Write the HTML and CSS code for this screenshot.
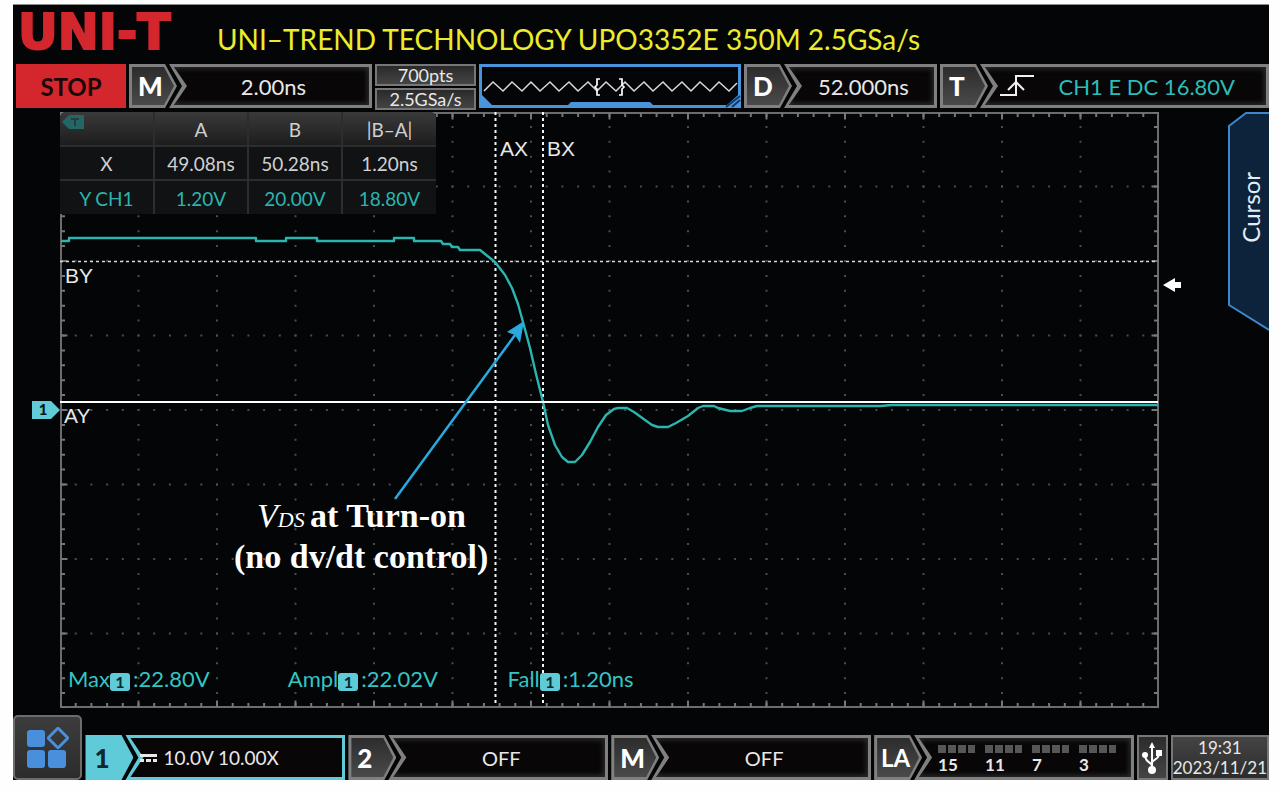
FILE: index.html
```
<!DOCTYPE html>
<html lang="en">
<head>
<meta charset="utf-8">
<title>UNI-T Oscilloscope</title>
<link rel="stylesheet" href="styles.css">
</head>
<body>
<div class="scope">
  <header class="header">
    <span class="logo">UNI-T</span>
    <h1 class="model">UNI–TREND TECHNOLOGY UPO3352E 350M 2.5GSa/s</h1>
  </header>

  <div class="status">
    <button class="stop" type="button">STOP</button>
    <div class="panel panel-m">
      <span class="tag">M</span>
      <span class="value">2.00ns</span>
    </div>
    <div class="sampling">
      <span>700pts</span>
      <span>2.5GSa/s</span>
    </div>
    <svg class="overview" viewBox="0 0 262 44" preserveAspectRatio="none" aria-hidden="true">
      <rect width="262" height="44" fill="#4a94dc"/>
      <path d="M3 3H259V31L248 41H3Z" fill="#030506"/>
      <path d="M0 30L3 31L14 42H0Z" fill="#4a94dc"/>
      <path d="M88 42L92 38H171L175 42V44H88Z" fill="#4a94dc"/>
      <path d="M247 43L261 32M253 43L261 36" stroke="#123a68" stroke-width="2"/>
      <path d="M5 27L14 18L24 27L33 18L43 27L52 18L61 27L71 18L80 27L90 18L99 27L109 18L118 27L127 18L137 27L146 18L155 27L165 18L174 27L184 18L193 27L203 18L212 27L221 18L231 27L240 18L250 27L258 19" fill="none" stroke="#d8d8d8" stroke-width="1.5"/>
      <path d="M121 15H118V21L116 23L118 25V31H121M140 15H143V21L145 23L143 25V31H140" fill="none" stroke="#fff" stroke-width="1.7"/>
    </svg>
    <div class="panel panel-d">
      <span class="tag">D</span>
      <span class="value">52.000ns</span>
    </div>
    <div class="panel panel-t">
      <span class="tag">T</span>
      <span class="value trigger">
        <svg width="36" height="24" viewBox="0 0 36 24" fill="none" stroke="#f0f0f0" stroke-width="2" aria-hidden="true">
          <path d="M1 21H17V2H35M9 16L17 8L25 16"/>
        </svg>
        <span>CH1 E DC 16.80V</span>
      </span>
    </div>
  </div>

  <main class="main">
    <div class="left-rail">
      <svg class="ch-marker" viewBox="0 0 28 24" aria-hidden="true">
        <path d="M0 3H19L28 12L19 21H0Z" fill="#62cbd8"/>
        <text x="11" y="17" text-anchor="middle" class="marker-text">1</text>
      </svg>
    </div>

    <section class="plot">
      <svg class="graph" viewBox="0 0 1099 596" role="img" aria-label="Drain-source voltage waveform">
        <path class="dots-v" d="M78.5 0V596M157 0V596M235.5 0V596M314 0V596M392.5 0V596M471 0V596M549.5 0V596M628 0V596M706.5 0V596M785 0V596M863.5 0V596M942 0V596M1020.5 0V596"/>
        <path class="dots-h" d="M0 74.5H1099M0 149H1099M0 223.5H1099M0 298H1099M0 372.5H1099M0 447H1099M0 521.5H1099"/>
        <rect class="edge" x="1" y="1" width="1097" height="594"/>
        <path class="ticks-h" d="M0 3H1099M0 593H1099"/>
        <path class="ticks-v" d="M3 0V596M1096 0V596"/>
        <path class="major-h" d="M0 4H1099M0 592H1099"/>
        <path class="major-v" d="M4 0V596M1095 0V596"/>
        <path class="cursor-v" d="M435.5 0V594M483 0V594"/>
        <path class="cursor-h" d="M0 149.5H1098"/>
        <path class="wave" d="M1 129H9V126H196V129H226V126H257V129H334V126H354V129H381L383 132H390L392 135H398L400 138H420L425 142L435 150L445 163L452 176L458 192L463 210L470 236L476 262L483 290L488 313L495 333L502 345L508 350H515L522 343L530 330L538 315L546 303L554 297L558 296H567L574 300L585 308L592 313L598 315H608L616 311L628 304L638 296L643 294H654L658 296L670 299H682L690 296L697 294H820L832 293H1098"/>
        <path d="M0 290H1098" stroke="#fff" stroke-width="2"/>
        <path d="M335 387L455 223" stroke="#29a9e0" stroke-width="2.5"/>
        <path d="M464 209L447 220L455 223L460 231Z" fill="#29a9e0"/>
        <g class="cursor-label">
          <text x="440" y="44">AX</text>
          <text x="487" y="44">BX</text>
          <text x="5" y="171">BY</text>
          <text x="4" y="311">AY</text>
        </g>
        <g class="note">
          <text x="197" y="415"><tspan class="note-var">V</tspan><tspan class="note-sub">DS</tspan></text>
          <text x="250" y="415">at Turn-on</text>
          <text x="174" y="456">(no dv/dt control)</text>
        </g>
      </svg>

      <table class="cursors">
        <thead>
          <tr>
            <th scope="col"><svg class="t-mark" width="22" height="14" viewBox="0 0 22 14" aria-hidden="true"><path d="M7 0H22V14H7L0 7Z" fill="#236666"/><path d="M9 4H17M13 4V11" stroke="#2c3c3c" stroke-width="2"/></svg></th>
            <th scope="col">A</th><th scope="col">B</th><th scope="col">|B–A|</th>
          </tr>
        </thead>
        <tbody>
          <tr><th scope="row">X</th><td>49.08ns</td><td>50.28ns</td><td>1.20ns</td></tr>
          <tr class="ch1"><th scope="row">Y CH1</th><td>1.20V</td><td>20.00V</td><td>18.80V</td></tr>
        </tbody>
      </table>

      <div class="measures">
        <span class="measure">Max<b class="badge">1</b>:22.80V</span>
        <span class="measure">Ampl<b class="badge">1</b>:22.02V</span>
        <span class="measure">Fall<b class="badge">1</b>:1.20ns</span>
      </div>
    </section>

    <div class="right-rail">
      <svg class="level" viewBox="0 0 18 14" aria-hidden="true"><path d="M0 7L12 0V4H18V10H12V14Z" fill="#fff"/></svg>
      <button class="cursor-tab" type="button">
        <svg class="tab-shape" viewBox="0 0 41 220" preserveAspectRatio="none" aria-hidden="true">
          <path d="M41 1H18L1 14V193L41 218" fill="#0d233b" stroke="#3f86cd" stroke-width="2"/>
        </svg>
        <span class="tab-text">Cursor</span>
      </button>
    </div>
  </main>

  <footer class="footer">
    <button class="apps" type="button" aria-label="Menu">
      <svg width="42" height="42" viewBox="0 0 42 42" aria-hidden="true">
        <g fill="#4a8fdb">
          <rect x="0" y="3" width="18" height="17" rx="3"/>
          <rect x="0" y="23" width="18" height="18" rx="3"/>
          <rect x="21" y="23" width="18" height="18" rx="3"/>
        </g>
        <rect x="24" y="4" width="14" height="14" rx="1" transform="rotate(45 31 11)" fill="none" stroke="#4a8fdb" stroke-width="3"/>
      </svg>
    </button>
    <div class="panel panel-ch panel-active">
      <span class="tag">1</span>
      <span class="value coupling">
        <svg width="17" height="8" viewBox="0 0 17 8" aria-hidden="true"><path d="M0 0H17V3H0ZM0 5H4V8H0ZM6 5H11V8H6ZM13 5H17V8H13Z" fill="#e8e8e8"/></svg>
        <span>10.0V 10.00X</span>
      </span>
    </div>
    <div class="panel panel-ch"><span class="tag">2</span><span class="value">OFF</span></div>
    <div class="panel panel-ch"><span class="tag">M</span><span class="value">OFF</span></div>
    <div class="panel panel-ch">
      <span class="tag tag-light">LA</span>
      <span class="value logic">
        <span class="bits"><i></i><b>15</b></span>
        <span class="bits"><i></i><b>11</b></span>
        <span class="bits"><i></i><b>7</b></span>
        <span class="bits"><i></i><b>3</b></span>
      </span>
    </div>
    <div class="usb">
      <svg width="20" height="32" viewBox="0 0 20 32" fill="none" stroke="#fff" stroke-width="2" aria-label="USB">
        <path d="M10 28V4M10 24C10 20 3 21 3 13M10 21C10 17 17 18 17 12"/>
        <path d="M10 0L13 6H7Z" fill="#fff" stroke="none"/>
        <circle cx="10" cy="28" r="4" fill="#fff" stroke="none"/>
        <circle cx="3" cy="13" r="3" fill="#fff" stroke="none"/>
        <path d="M14 8H20V14H14Z" fill="#fff" stroke="none"/>
      </svg>
    </div>
    <div class="clock"><time>19:31</time><time>2023/11/21</time></div>
  </footer>
</div>
</body>
</html>
```

FILE: styles.css
```
* {
  box-sizing: border-box;
}

body {
  margin: 0;
  padding: 4px 11px 10px 13px;
  background: #fefefe;
  font-family: Lato, "Open Sans", sans-serif;
  font-size: 22px;
  color: #e8e8e8;
}

button {
  margin: 0;
  padding: 0;
  border: 0;
  font: inherit;
}

.scope {
  background: #030506;
  border-top: 1px solid #8c8c8c;
}

.header {
  display: flex;
  align-items: center;
  gap: 24px;
  height: 59px;
  padding: 0 0 4px 5px;
}

.logo {
  min-width: 175px;
  font-family: "DejaVu Sans", sans-serif;
  font-size: 49px;
  font-weight: 700;
  font-kerning: none;
  line-height: 52px;
  color: #d3262d;
  -webkit-text-stroke: 2px #d3262d;
}

.model {
  margin: 12px 0 0;
  font-size: 28px;
  font-weight: 400;
  line-height: 32px;
  color: #ecec2c;
  white-space: nowrap;
}

/* Bars */
.status {
  display: flex;
  gap: 3px;
  height: 44px;
  padding-left: 3px;
}

.stop {
  flex: 110 1 0;
  background: #d3262d;
  color: #1a0809;
  font-size: 24px;
  font-weight: 700;
}

.panel {
  display: flex;
  min-width: 0;
}

.panel-m { flex: 243 1 0; }
.panel-d { flex: 193 1 0; }
.panel-t { flex: 329 1 0; }
.panel-ch { flex: 262 1 0; }

.tag,
.value {
  position: relative;
  z-index: 0;
  display: flex;
  align-items: center;
  background: #808080;
}

.tag::before,
.value::before {
  content: "";
  position: absolute;
  z-index: -1;
  inset: 3px;
}

.tag {
  flex: none;
  width: 48px;
  padding-left: 9px;
  font-size: 26px;
  font-weight: 900;
  color: #fff;
  clip-path: polygon(0 0, 36px 0, 100% 50%, 36px 100%, 0 100%);
}

.tag::before {
  background: linear-gradient(#2c2c2c, #4a4a4a);
  clip-path: polygon(0 0, 32px 0, 100% 50%, 32px 100%, 0 100%);
}

.tag-light {
  padding-left: 7px;
  font-size: 24px;
  font-weight: 700;
}

.value {
  flex: 1;
  justify-content: center;
  margin-left: -8px;
  padding-left: 6px;
  clip-path: polygon(0 0, 100% 0, 100% 100%, 0 100%, 13px 50%);
}

.value::before {
  left: 5px;
  background: #080607;
  box-shadow: inset 0 0 5px 2px #2b2b2b;
  clip-path: polygon(0 0, 100% 0, 100% 100%, 0 100%, 13px 50%);
}

.panel-active .tag,
.panel-active .value {
  background: #5fcbd9;
}

.panel-active .tag {
  color: #10282c;
}

.panel-active .tag::before {
  background: #5fcbd9;
}

.panel-active .value::before {
  box-shadow: none;
}

.trigger {
  justify-content: space-between;
  padding: 0 34px 0 19px;
  color: #2bbdb9;
}

.sampling {
  flex: 101 1 0;
  display: flex;
  flex-direction: column;
  gap: 2px;
  font-size: 18px;
  line-height: 18px;
}

.sampling span {
  flex: 1;
  border: 2px solid #777;
  background: linear-gradient(#2a2a2a, #444);
  text-align: center;
}

.overview {
  flex: 262 1 0;
  min-width: 0;
  height: 44px;
}

/* Plot area */
.main {
  display: grid;
  grid-template-columns: 47px 1fr 110px;
  padding: 4px 0 7px;
}

.left-rail,
.right-rail {
  display: flex;
  align-items: flex-start;
  justify-content: space-between;
}

.ch-marker {
  width: 28px;
  margin: 286px 0 0 19px;
}

.marker-text {
  font-size: 15px;
  font-weight: 900;
  fill: #08181a;
}

.plot {
  position: relative;
}

.graph {
  display: block;
  width: 100%;
  height: auto;
  fill: none;
}

.edge { stroke: #6c6c6c; stroke-width: 2; }
.dots-v { stroke: #4c4c4c; stroke-width: 2; stroke-dasharray: 2 12.9; stroke-dashoffset: 1; }
.dots-h { stroke: #4c4c4c; stroke-width: 2; stroke-dasharray: 2 13.7; stroke-dashoffset: 1; }
.ticks-h { stroke: #777; stroke-width: 4; stroke-dasharray: 2 13.7; stroke-dashoffset: 1; }
.ticks-v { stroke: #777; stroke-width: 4; stroke-dasharray: 2 12.9; stroke-dashoffset: 1; }
.major-h { stroke: #777; stroke-width: 7; stroke-dasharray: 2 76.5; stroke-dashoffset: 1; }
.major-v { stroke: #777; stroke-width: 7; stroke-dasharray: 2 72.5; stroke-dashoffset: 1; }
.cursor-v { stroke: #f4f4f4; stroke-width: 2; stroke-dasharray: 3 3; }
.cursor-h { stroke: #d8d8d8; stroke-width: 1.6; stroke-dasharray: 3 3; }
.wave { stroke: #2bb5b0; stroke-width: 2.4; stroke-linejoin: round; }

.cursor-label {
  font-family: "Liberation Sans", Arial, sans-serif;
  font-size: 21px;
  fill: #e8e8e8;
}

.note {
  font-family: "Liberation Serif", "Times New Roman", serif;
  font-size: 34px;
  font-weight: 700;
  fill: #fff;
}

.note-var,
.note-sub {
  font-style: italic;
  font-weight: 400;
}

.note-sub {
  font-size: 22px;
}

.cursors {
  position: absolute;
  top: 0;
  left: 0;
  width: 376px;
  border-collapse: collapse;
  table-layout: fixed;
  background: #101214;
  border-radius: 6px 6px 0 0;
  overflow: hidden;
  font-size: 19px;
  line-height: 24px;
  color: #d0d0d0;
}

.cursors th,
.cursors td {
  position: relative;
  height: 34px;
  padding: 5px 0 3px;
  border-left: 2px solid #2b2d2e;
  border-top: 2px solid #2b2d2e;
  font-weight: 400;
  text-align: center;
}

.cursors th:first-child {
  border-left: 0;
}

.cursors thead th {
  border-top: 0;
}

.cursors thead {
  background: linear-gradient(#3a3a3a, #1c1c1c);
}

.cursors .ch1 th,
.cursors .ch1 td {
  color: #2bb5b0;
}

.t-mark {
  position: absolute;
  top: 3px;
  left: 2px;
}

.measures {
  position: absolute;
  right: 0;
  bottom: 15px;
  left: 0;
  display: grid;
  grid-template-columns: repeat(5, 20%);
  line-height: 28px;
  color: #35c4c4;
}

.measure {
  display: flex;
  align-items: center;
  padding-left: 8px;
}

.badge {
  width: 20px;
  margin: 6px 3px 0 0;
  border-radius: 3px;
  background: #5fcbd9;
  color: #08292c;
  font-size: 16px;
  line-height: 18px;
  text-align: center;
}

.level {
  width: 18px;
  margin: 166px 0 0 4px;
}

.cursor-tab {
  position: relative;
  width: 41px;
  height: 220px;
  background: none;
  color: #e4ecf4;
}

.tab-shape {
  position: absolute;
  inset: 0;
  width: 100%;
  height: 100%;
}

.tab-text {
  position: relative;
  display: block;
  margin: 0 4px 30px auto;
  font-size: 24px;
  line-height: 28px;
  writing-mode: vertical-rl;
  transform: rotate(180deg);
}

/* Footer */
.footer {
  display: flex;
  align-items: flex-end;
  gap: 3px;
  font-size: 20px;
}

.footer .panel {
  height: 45px;
}

.apps {
  display: flex;
  align-items: center;
  justify-content: center;
  flex: 66 1 0;
  height: 65px;
  border: 2px solid #6c6c6c;
  border-radius: 5px;
  background: linear-gradient(#3c3c3c, #2c2c2c);
}

.coupling {
  justify-content: flex-start;
  gap: 6px;
  padding-left: 15px;
  font-size: 19px;
}

.logic {
  justify-content: space-between;
  padding: 0 18px 0 24px;
}

.bits {
  display: grid;
  gap: 3px;
  width: 37px;
  font-size: 17px;
  line-height: 18px;
}

.bits i {
  height: 8px;
  margin-top: 3px;
  background: repeating-linear-gradient(90deg, #565656 0 8px, #0000 8px 10px);
}

.usb {
  display: flex;
  align-items: center;
  justify-content: center;
  flex: 27 1 0;
  height: 45px;
  border: 2px solid #777;
  background: linear-gradient(#2c2c2c, #444);
}

.clock {
  display: flex;
  flex-direction: column;
  justify-content: center;
  flex: 89 1 0;
  height: 45px;
  border: 2px solid #777;
  background: linear-gradient(#444, #2c2c2c);
  font-size: 17px;
  line-height: 20px;
  text-align: center;
}
```
